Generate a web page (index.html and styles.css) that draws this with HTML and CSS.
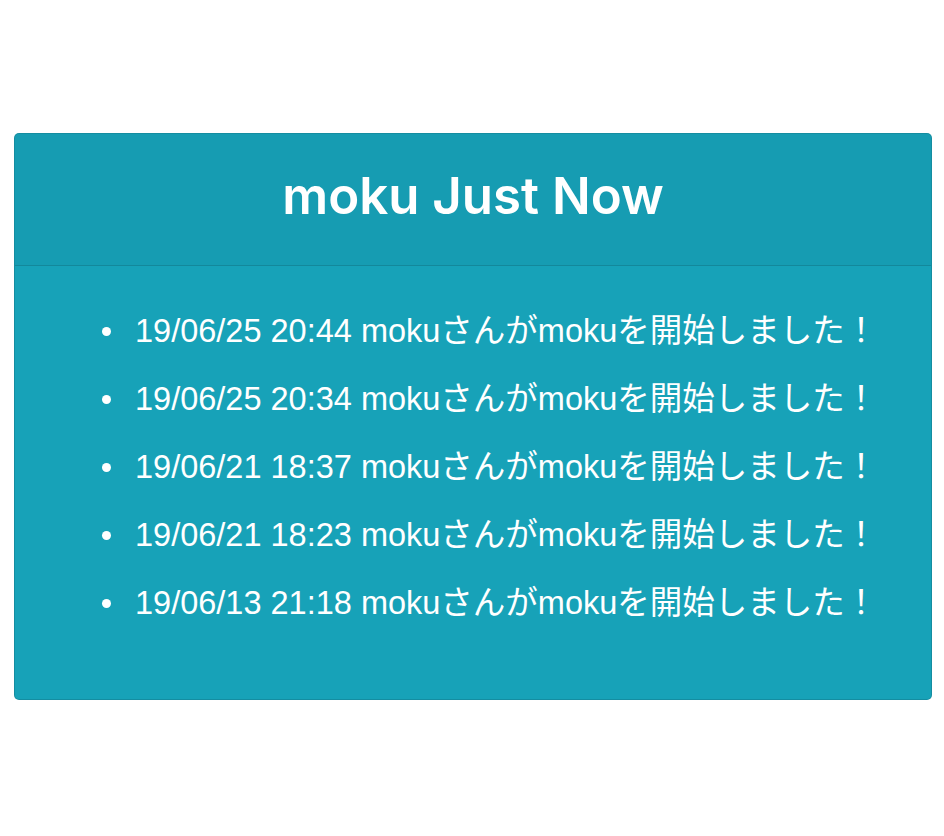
FILE: index.html
```html
<!DOCTYPE html>
<html lang="ja">
<head>
<meta charset="utf-8">
<title>moku Just Now</title>
<link rel="stylesheet" href="styles.css">
</head>
<body>
<div class="page">
  <div class="card">
    <div class="card-header">
      <h1 class="title">moku Just Now</h1>
    </div>
    <div class="card-body">
      <ul class="feed">
        <li>19/06/25 20:44 mokuさんがmokuを開始しました！</li>
        <li>19/06/25 20:34 mokuさんがmokuを開始しました！</li>
        <li>19/06/21 18:37 mokuさんがmokuを開始しました！</li>
        <li>19/06/21 18:23 mokuさんがmokuを開始しました！</li>
        <li>19/06/13 21:18 mokuさんがmokuを開始しました！</li>
      </ul>
    </div>
  </div>
</div>
</body>
</html>
```

FILE: styles.css
```css
html, body {
  margin: 0;
  padding: 0;
  background: #ffffff;
}

body {
  font-family: "Liberation Sans", "Noto Sans CJK JP", sans-serif;
  color: #ffffff;
}

.page {
  padding: 133px 12px 0 14px;
}

.card {
  width: 918px;
  box-sizing: border-box;
  background: #17a2b8;
  border: 1px solid rgba(0, 0, 0, 0.125);
  border-radius: 5px;
  overflow: hidden;
}

.card-header {
  background: rgba(0, 0, 0, 0.03);
  border-bottom: 1px solid rgba(0, 0, 0, 0.125);
  padding: 32px 20px 40px;
  text-align: center;
}

.title {
  margin: 0;
  font-family: Inter, "Liberation Sans", sans-serif;
  font-size: 51px;
  line-height: 59px;
  font-weight: 600;
  letter-spacing: 0;
}

.card-body {
  padding: 0;
}

.feed {
  margin: 0;
  padding: 31px 20px 62px 120px;
  list-style: none;
}

.feed li {
  font-size: 32.5px;
  line-height: 68px;
  white-space: nowrap;
}

.feed li::before {
  content: "";
  display: inline-block;
  width: 9px;
  height: 9px;
  border-radius: 50%;
  background: #ffffff;
  margin-left: -33px;
  margin-right: 24px;
  vertical-align: 0.2em;
}
```
